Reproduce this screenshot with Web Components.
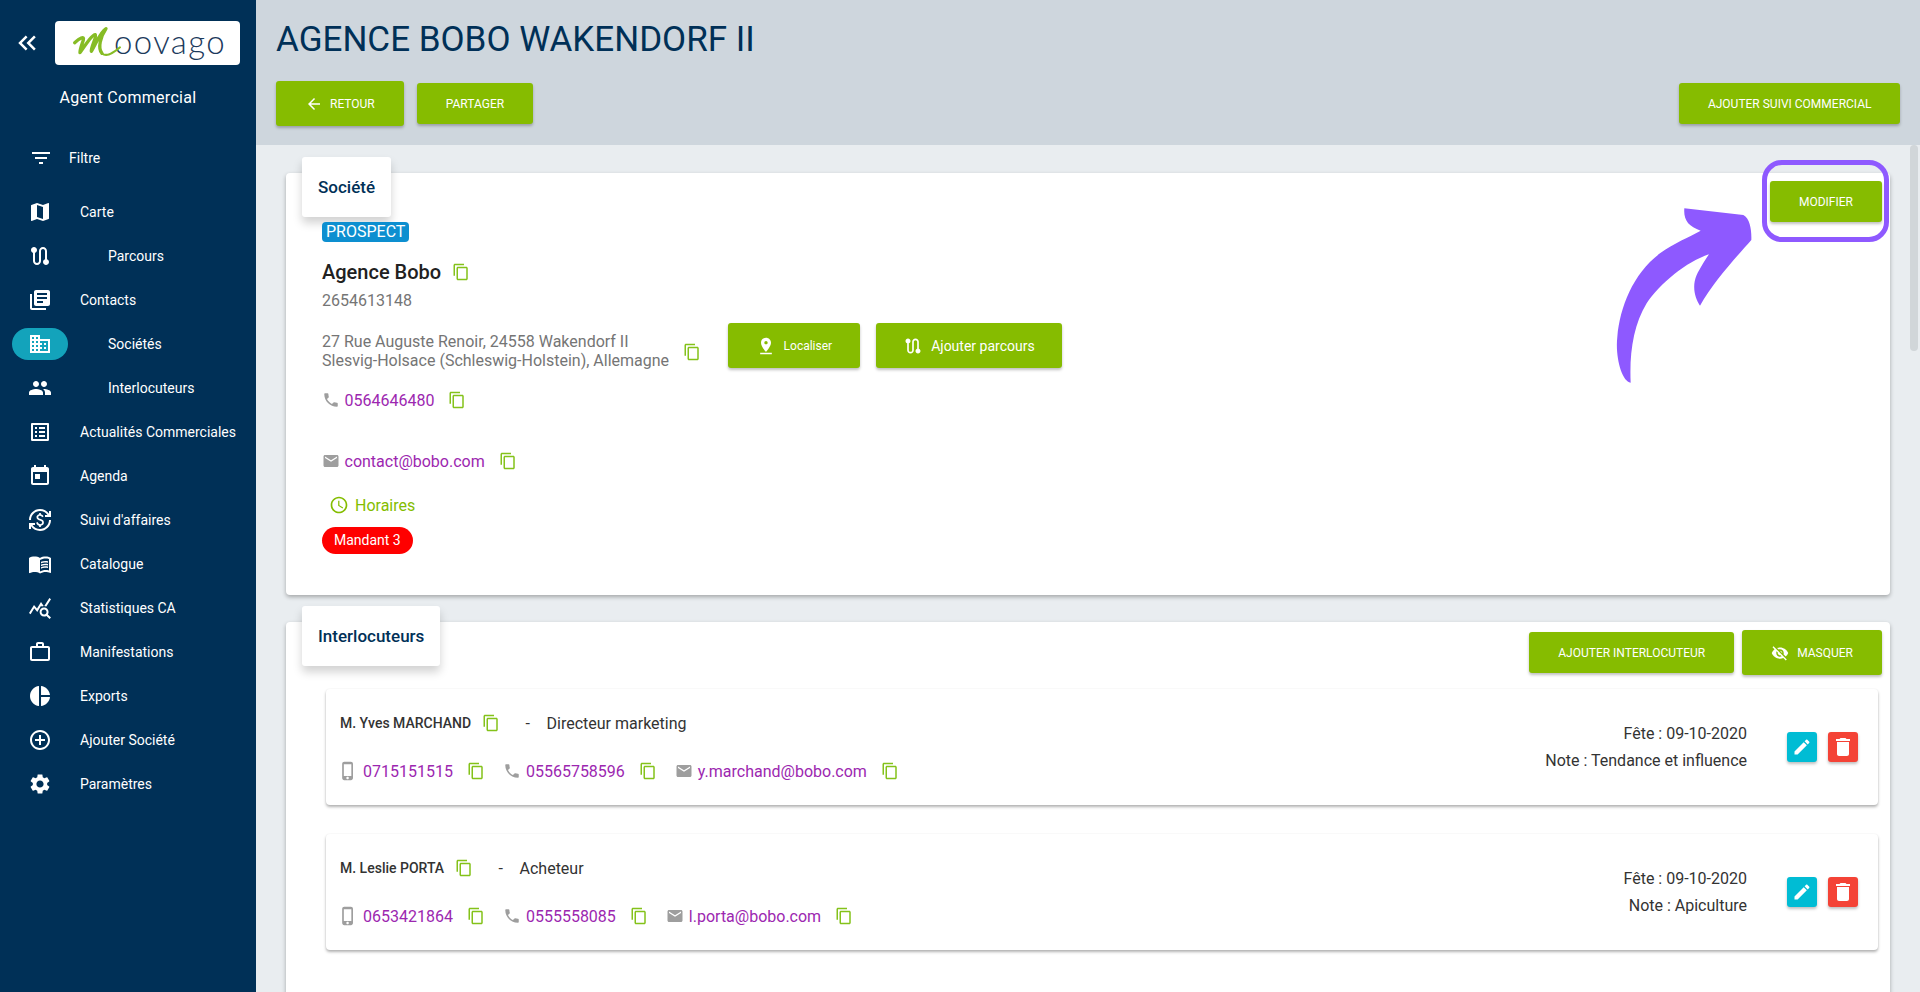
<!DOCTYPE html>
<html lang="fr">
<head>
<meta charset="utf-8">
<title>Moovago</title>
<style>
  html, body { margin: 0; height: 100%; overflow: hidden; }
  body { font-family: Roboto, "Liberation Sans", sans-serif; }
</style>
</head>
<body>
<x-app>
  <x-sidebar slot="side" role="Agent Commercial">
    <x-nav icon="filter" filter>Filtre</x-nav>
    <x-nav icon="map" style="margin-top:10px">Carte</x-nav>
    <x-nav icon="route" sub>Parcours</x-nav>
    <x-nav icon="books">Contacts</x-nav>
    <x-nav icon="domain" sub active>Sociétés</x-nav>
    <x-nav icon="people" sub>Interlocuteurs</x-nav>
    <x-nav icon="listalt">Actualités Commerciales</x-nav>
    <x-nav icon="today">Agenda</x-nav>
    <x-nav icon="exchange">Suivi d'affaires</x-nav>
    <x-nav icon="book">Catalogue</x-nav>
    <x-nav icon="stats">Statistiques CA</x-nav>
    <x-nav icon="work">Manifestations</x-nav>
    <x-nav icon="pie">Exports</x-nav>
    <x-nav icon="addcircle">Ajouter Société</x-nav>
    <x-nav icon="settings">Paramètres</x-nav>
  </x-sidebar>

  <x-header slot="head" title="AGENCE BOBO WAKENDORF II">
    <x-btn icon="back" tall upper style="gap:7px">Retour</x-btn>
    <x-btn upper>Partager</x-btn>
    <x-btn upper slot="right" style="padding:0 28.5px">Ajouter suivi commercial</x-btn>
  </x-header>

  <x-card label="Société" style="padding-bottom:41px">
    <x-btn upper slot="actions" style="margin:24px 8px 0 0;width:112px">Modifier</x-btn>
    <x-company></x-company>
  </x-card>

  <x-card label="Interlocuteurs" style="margin-top:27px;min-height:500px">
    <x-btn upper slot="actions" style="margin:26px 0 0 0">Ajouter interlocuteur</x-btn>
    <x-btn upper slot="actions" icon="eyeoff" tall style="margin:24px 8px 0 8px">Masquer</x-btn>
    <x-contact name="M. Yves MARCHAND" job="Directeur marketing" mobile="0715151515" tel="05565758596" mail="y.marchand@bobo.com" note="Tendance et influence"></x-contact>
    <x-contact name="M. Leslie PORTA" job="Acheteur" mobile="0653421864" tel="0555558085" mail="l.porta@bobo.com" note="Apiculture" style="margin-top:29px"></x-contact>
  </x-card>
</x-app>

<script>
const ICONS = {
  chevrons: "M17.59 18 19 16.59 14.42 12 19 7.41 17.59 6l-6 6zM11 18l1.41-1.41L7.83 12l4.58-4.59L11 6l-6 6z",
  filter: "M10 18h4v-2h-4v2zM3 6v2h18V6H3zm3 7h12v-2H6v2z",
  map: "M20.5 3l-.16.03L15 5.1 9 3 3.36 4.9c-.21.07-.36.25-.36.48V20.5c0 .28.22.5.5.5l.16-.03L9 18.9l6 2.1 5.64-1.9c.21-.07.36-.25.36-.48V3.5c0-.28-.22-.5-.5-.5zM15 19l-6-2.11V5l6 2.11V19z",
  route: "M19 15.18V7c0-2.21-1.79-4-4-4s-4 1.79-4 4v10c0 1.1-.9 2-2 2s-2-.9-2-2V8.82C8.16 8.4 9 7.3 9 6c0-1.66-1.34-3-3-3S3 4.34 3 6c0 1.3.84 2.4 2 2.82V17c0 2.21 1.79 4 4 4s4-1.79 4-4V7c0-1.1.9-2 2-2s2 .9 2 2v8.18c-1.16.41-2 1.51-2 2.82 0 1.66 1.34 3 3 3s3-1.34 3-3c0-1.3-.84-2.4-2-2.82z",
  books: "M4 6H2v14c0 1.1.9 2 2 2h14v-2H4V6zm16-4H8c-1.1 0-2 .9-2 2v12c0 1.1.9 2 2 2h12c1.1 0 2-.9 2-2V4c0-1.1-.9-2-2-2zm-1 9H9V9h10v2zm-4 4H9v-2h6v2zm4-8H9V5h10v2z",
  domain: "M12 7V3H2v18h20V7H12zM6 19H4v-2h2v2zm0-4H4v-2h2v2zm0-4H4V9h2v2zm0-4H4V5h2v2zm4 12H8v-2h2v2zm0-4H8v-2h2v2zm0-4H8V9h2v2zm0-4H8V5h2v2zm10 12h-8v-2h2v-2h-2v-2h2v-2h-2V9h8v10zm-2-8h-2v2h2v-2zm0 4h-2v2h2v-2z",
  people: "M16 11c1.66 0 2.99-1.34 2.99-3S17.66 5 16 5c-1.66 0-3 1.34-3 3s1.34 3 3 3zm-8 0c1.66 0 2.99-1.34 2.99-3S9.66 5 8 5C6.34 5 5 6.34 5 8s1.34 3 3 3zm0 2c-2.33 0-7 1.17-7 3.5V19h14v-2.5c0-2.33-4.67-3.5-7-3.5zm8 0c-.29 0-.62.02-.97.05 1.16.84 1.97 1.97 1.97 3.45V19h6v-2.5c0-2.33-4.67-3.5-7-3.5z",
  listalt: "M19 5v14H5V5h14m1.1-2H3.9c-.5 0-.9.4-.9.9v16.2c0 .4.4.9.9.9h16.2c.4 0 .9-.5.9-.9V3.9c0-.5-.5-.9-.9-.9zM11 7h6v2h-6V7zm0 4h6v2h-6v-2zm0 4h6v2h-6v-2zM7 7h2v2H7V7zm0 4h2v2H7v-2zm0 4h2v2H7v-2z",
  today: "M19 3h-1V1h-2v2H8V1H6v2H5c-1.11 0-1.99.9-1.99 2L3 19c0 1.1.89 2 2 2h14c1.1 0 2-.9 2-2V5c0-1.1-.9-2-2-2zm0 16H5V8h14v11zM7 10h5v5H7z",
  exchange: "M12.89 11.1c-1.78-.59-2.64-.96-2.64-1.9 0-1.02 1.11-1.39 1.81-1.39 1.31 0 1.79.99 1.9 1.34l1.58-.67c-.15-.44-.82-1.91-2.66-2.23V5h-1.75v1.26c-2.6.56-2.62 2.85-2.62 2.96 0 2.27 2.25 2.91 3.35 3.31 1.58.56 2.28 1.07 2.28 2.03 0 1.13-1.05 1.61-1.98 1.61-1.82 0-2.34-1.87-2.4-2.09l-1.66.67c.63 2.19 2.28 2.78 3.02 2.96V19h1.75v-1.24c.52-.09 3.02-.59 3.02-3.22.01-1.39-.6-2.61-3.05-3.44zM3 21H1v-6h6v2H4.52c1.61 2.41 4.36 4 7.48 4 4.97 0 9-4.03 9-9h2c0 6.08-4.92 11-11 11-3.72 0-7.01-1.85-9-4.67V21zm-2-9C1 5.92 5.92 1 12 1c3.72 0 7.01 1.85 9 4.67V3h2v6h-6V7h2.48C17.87 4.59 15.12 3 12 3c-4.97 0-9 4.03-9 9H1z",
  book: "M21 5c-1.11-.35-2.33-.5-3.5-.5-1.95 0-4.05.4-5.5 1.5-1.45-1.1-3.55-1.5-5.5-1.5S2.45 4.9 1 6v14.65c0 .25.25.5.5.5.1 0 .15-.05.25-.05C3.1 20.45 5.05 20 6.5 20c1.95 0 4.05.4 5.5 1.5 1.35-.85 3.8-1.5 5.5-1.5 1.65 0 3.35.3 4.75 1.05.1.05.15.05.25.05.25 0 .5-.25.5-.5V6c-.6-.45-1.25-.75-2-1zm0 13.5c-1.1-.35-2.3-.5-3.5-.5-1.7 0-4.15.65-5.5 1.5V8c1.35-.85 3.8-1.5 5.5-1.5 1.2 0 2.4.15 3.5.5v11.5zM17.5 10.5c.88 0 1.73.09 2.5.26V9.24c-.79-.15-1.64-.24-2.5-.24-1.7 0-3.24.29-4.5.83v1.66c1.13-.64 2.7-.99 4.5-.99zM13 12.49v1.66c1.13-.64 2.7-.99 4.5-.99.88 0 1.73.09 2.5.26V11.9c-.79-.15-1.64-.24-2.5-.24-1.7 0-3.24.3-4.5.83zM17.5 14.33c-1.7 0-3.24.29-4.5.83v1.66c1.13-.64 2.7-.99 4.5-.99.88 0 1.73.09 2.5.26v-1.52c-.79-.16-1.64-.24-2.5-.24z",
  stats: "M19.88 18.47c.44-.7.7-1.51.7-2.39 0-2.49-2.01-4.5-4.5-4.5s-4.5 2.01-4.5 4.5 2.01 4.5 4.49 4.5c.88 0 1.7-.26 2.39-.7L21.58 23 23 21.58l-3.12-3.11zm-3.8.11c-1.38 0-2.5-1.12-2.5-2.5s1.12-2.5 2.5-2.5 2.5 1.12 2.5 2.5-1.12 2.5-2.5 2.5zm-.36-8.5c-.74.02-1.45.18-2.1.45l-.55-.83-3.8 6.18-3.01-3.52-3.63 5.81L1 17l5-8 3 3.5L13 6l2.72 4.08zm2.59.5c-.64-.28-1.33-.45-2.05-.49L21.38 2 23 3.18l-4.69 7.4z",
  work: "M14 6V4h-4v2h4zM4 8v11h16V8H4zm16-2c1.11 0 2 .89 2 2v11c0 1.11-.89 2-2 2H4c-1.11 0-2-.89-2-2l.01-11c0-1.11.88-2 1.99-2h4V4c0-1.11.89-2 2-2h4c1.11 0 2 .89 2 2v2h4z",
  pie: "M11 2v20c-5.07-.5-9-4.79-9-10s3.93-9.5 9-10zm2.03 0v8.99H22c-.47-4.74-4.24-8.52-8.97-8.99zm0 11.01V22c4.74-.47 8.5-4.25 8.97-8.99h-8.97z",
  addcircle: "M13 7h-2v4H7v2h4v4h2v-4h4v-2h-4V7zm-1-5C6.48 2 2 6.48 2 12s4.48 10 10 10 10-4.48 10-10S17.52 2 12 2zm0 18c-4.41 0-8-3.59-8-8s3.59-8 8-8 8 3.59 8 8-3.59 8-8 8z",
  settings: "M19.14 12.94c.04-.3.06-.61.06-.94 0-.32-.02-.64-.07-.94l2.03-1.58c.18-.14.23-.41.12-.61l-1.92-3.32c-.12-.22-.37-.29-.59-.22l-2.39.96c-.5-.38-1.03-.7-1.62-.94l-.36-2.54c-.04-.24-.24-.41-.48-.41h-3.84c-.24 0-.43.17-.47.41l-.36 2.54c-.59.24-1.13.57-1.62.94l-2.39-.96c-.22-.08-.47 0-.59.22L2.74 8.87c-.12.21-.08.47.12.61l2.03 1.58c-.05.3-.09.63-.09.94s.02.64.07.94l-2.03 1.58c-.18.14-.23.41-.12.61l1.92 3.32c.12.22.37.29.59.22l2.39-.96c.5.38 1.03.7 1.62.94l.36 2.54c.05.24.24.41.48.41h3.84c.24 0 .44-.17.47-.41l.36-2.54c.59-.24 1.13-.56 1.62-.94l2.39.96c.22.08.47 0 .59-.22l1.92-3.32c.12-.22.07-.47-.12-.61l-2.01-1.58zM12 15.6c-1.98 0-3.6-1.62-3.6-3.6s1.62-3.6 3.6-3.6 3.6 1.62 3.6 3.6-1.62 3.6-3.6 3.6z",
  back: "M20 11H7.83l5.59-5.59L12 4l-8 8 8 8 1.41-1.41L7.83 13H20v-2z",
  copy: "M16 1H4c-1.1 0-2 .9-2 2v14h2V3h12V1zm3 4H8c-1.1 0-2 .9-2 2v14c0 1.1.9 2 2 2h11c1.1 0 2-.9 2-2V7c0-1.1-.9-2-2-2zm0 16H8V7h11v14z",
  phone: "M6.62 10.79c1.44 2.83 3.76 5.14 6.59 6.59l2.2-2.2c.27-.27.67-.36 1.02-.24 1.12.37 2.33.57 3.57.57.55 0 1 .45 1 1V20c0 .55-.45 1-1 1-9.39 0-17-7.61-17-17 0-.55.45-1 1-1h3.5c.55 0 1 .45 1 1 0 1.25.2 2.45.57 3.57.11.35.03.74-.25 1.02l-2.2 2.2z",
  mail: "M20 4H4c-1.1 0-1.99.9-1.99 2L2 18c0 1.1.9 2 2 2h16c1.1 0 2-.9 2-2V6c0-1.1-.9-2-2-2zm0 4l-8 5-8-5V6l8 5 8-5v2z",
  mobile: "M15.5 1h-8C6.12 1 5 2.12 5 3.5v17C5 21.88 6.12 23 7.5 23h8c1.38 0 2.5-1.12 2.5-2.5v-17C18 2.12 16.88 1 15.5 1zm-4 21c-.83 0-1.5-.67-1.5-1.5s.67-1.5 1.5-1.5 1.5.67 1.5 1.5-.67 1.5-1.5 1.5zm4.5-4H7V4h9v14z",
  clock: "M11.99 2C6.47 2 2 6.48 2 12s4.47 10 9.99 10C17.52 22 22 17.52 22 12S17.52 2 11.99 2zM12 20c-4.42 0-8-3.58-8-8s3.58-8 8-8 8 3.58 8 8-3.58 8-8 8zm.5-13H11v6l5.25 3.15.75-1.23-4.5-2.67z",
  pin: "M18 8c0-3.31-2.69-6-6-6S6 4.69 6 8c0 4.5 6 11 6 11s6-6.5 6-11zm-8 0c0-1.1.9-2 2-2s2 .9 2 2-.89 2-2 2c-1.1 0-2-.9-2-2zM5 20v2h14v-2H5z",
  eyeoff: "M12 7c2.76 0 5 2.24 5 5 0 .65-.13 1.26-.36 1.83l2.92 2.92c1.51-1.26 2.7-2.89 3.43-4.75-1.73-4.39-6-7.5-11-7.5-1.4 0-2.74.25-3.98.7l2.16 2.16C10.74 7.13 11.35 7 12 7zM2 4.27l2.28 2.28.46.46C3.08 8.3 1.78 10.02 1 12c1.73 4.39 6 7.5 11 7.5 1.55 0 3.03-.3 4.38-.84l.42.42L19.73 22 21 20.73 3.27 3 2 4.27zM7.53 9.8l1.55 1.55c-.05.21-.08.43-.08.65 0 1.66 1.34 3 3 3 .22 0 .44-.03.65-.08l1.55 1.55c-.67.33-1.41.53-2.2.53-2.76 0-5-2.24-5-5 0-.79.2-1.53.53-2.2zm4.31-.78l3.15 3.15.02-.16c0-1.66-1.34-3-3-3l-.17.01z",
  edit: "M3 17.25V21h3.75L17.81 9.94l-3.75-3.75L3 17.25zM20.71 7.04c.39-.39.39-1.02 0-1.41l-2.34-2.34c-.39-.39-1.02-.39-1.41 0l-1.83 1.83 3.75 3.75 1.83-1.83z",
  trash: "M6 19c0 1.1.9 2 2 2h8c1.1 0 2-.9 2-2V7H6v12zM19 4h-3.5l-1-1h-5l-1 1H5v2h14V4z"
};

class XIcon extends HTMLElement {
  connectedCallback() {
    const size = this.getAttribute("size") || 24;
    this.attachShadow({ mode: "open" }).innerHTML = `
      <style>
        :host { display: inline-flex; flex: none; width: ${size}px; height: ${size}px; color: inherit; }
        svg { display: block; width: 100%; height: 100%; fill: currentColor; }
      </style>
      <svg viewBox="0 0 24 24"><path d="${ICONS[this.getAttribute("name")]}"/></svg>`;
  }
}

class XApp extends HTMLElement {
  constructor() {
    super();
    this.attachShadow({ mode: "open" }).innerHTML = `
      <style>
        :host { display: flex; position: relative; height: 100vh; overflow: hidden; }
        .col { flex: 1; min-width: 0; display: flex; flex-direction: column; }
        .main { flex: 1; overflow: hidden; background: #e9edf0; padding: 28px 30px 0; }
        .thumb { position: absolute; left: 1910px; top: 145px; width: 8px; height: 206px; border-radius: 4px; background: #d1d6d9; }
        .ring { position: absolute; left: 1762px; top: 160px; width: 117px; height: 72px; border: 5px solid #8e59ff; border-radius: 20px; }
        .arrow { position: absolute; left: 1580px; top: 60px; width: 340px; height: 340px; fill: #8e59ff; }
      </style>
      <slot name="side"></slot>
      <div class="col">
        <slot name="head"></slot>
        <div class="main"><slot></slot></div>
      </div>
      <div class="thumb"></div>
      <div class="ring"></div>
      <svg class="arrow" viewBox="0 0 1020 1020"><path d="M313 445 490 465C510 475 515 510 514 540 470 590 400 665 360 737 345 715 335 680 350 645 360 625 375 600 387 583 320 605 240 670 200 730 160 795 148 880 152 968 125 965 105 890 112 830 120 740 160 640 240 580 280 550 330 530 362 512 325 500 310 480 313 445Z"/></svg>`;
  }
}

class XLogo extends HTMLElement {
  constructor() {
    super();
    this.attachShadow({ mode: "open" }).innerHTML = `
      <style>
        :host { display: flex; align-items: center; position: relative; box-sizing: border-box; width: 185px; height: 44px; padding-left: 59px; background: #fff; border-radius: 4px; }
        span { font: 300 33px/44px Lato, sans-serif; color: #1c3a5c; letter-spacing: 1.4px; margin-top: -4px; }
        svg { position: absolute; inset: 0; width: 100%; height: 100%; fill: none; stroke: #86bc25; stroke-linecap: round; stroke-linejoin: round; }
      </style>
      <span>oovago</span>
      <svg viewBox="15 9 555 132">
        <path stroke-width="10" d="M74 74C88 62 104 52 100 66 96 80 90 92 90 104 104 84 128 48 136 50 142 54 122 88 124 100 136 82 150 42 168 32 152 56 142 90 156 106"/>
        <path stroke-width="6" d="M156 106C168 118 192 104 210 88"/>
      </svg>`;
  }
}

class XSidebar extends HTMLElement {
  connectedCallback() {
    this.attachShadow({ mode: "open" }).innerHTML = `
      <style>
        :host { display: block; flex: none; width: 256px; height: 100%; box-sizing: border-box; padding-top: 21px; background: #003057; color: #fff; font-size: 14px; }
        .top { display: flex; align-items: center; padding-left: 12px; gap: 13px; }
        .role { margin: 22px 0 27px; text-align: center; font-size: 16px; line-height: 22px; letter-spacing: .3px; }
      </style>
      <div class="top"><x-icon name="chevrons" size="30"></x-icon><x-logo></x-logo></div>
      <div class="role">${this.getAttribute("role")}</div>
      <slot></slot>`;
  }
}

class XNav extends HTMLElement {
  connectedCallback() {
    this.attachShadow({ mode: "open" }).innerHTML = `
      <style>
        :host { display: flex; align-items: center; height: 44px; padding-left: 12px; }
        :host([filter]) { padding-left: 13px; }
        .pill { width: 56px; height: 32px; display: flex; align-items: center; justify-content: center; border-radius: 16px; }
        :host([active]) .pill { background: #13a3bb; }
        .txt { margin-left: 12px; }
        :host([filter]) .txt { margin-left: 0; }
        :host([sub]) .txt { margin-left: 40px; }
      </style>
      <div class="pill"><x-icon name="${this.getAttribute("icon")}"></x-icon></div>
      <div class="txt"><slot></slot></div>`;
  }
}

class XHeader extends HTMLElement {
  connectedCallback() {
    this.attachShadow({ mode: "open" }).innerHTML = `
      <style>
        :host { display: block; height: 145px; box-sizing: border-box; padding: 20px 20px 0; background: #ced6dd; }
        h1 { margin: 0; font-weight: 400; font-size: 35px; line-height: 40px; color: #003057; }
        .bar { display: flex; align-items: center; height: 45px; margin-top: 21px; }
        ::slotted(x-btn:not(:first-child)) { margin-left: 13px; }
        .sp { flex: 1; }
      </style>
      <h1>${this.getAttribute("title")}</h1>
      <div class="bar"><slot></slot><div class="sp"></div><slot name="right"></slot></div>`;
    this.removeAttribute("title");
  }
}

class XBtn extends HTMLElement {
  connectedCallback() {
    const icon = this.getAttribute("icon");
    const size = this.getAttribute("icon-size") || 18;
    this.attachShadow({ mode: "open" }).innerHTML = `
      <style>
        :host { display: inline-flex; align-items: center; justify-content: center; gap: 8px; box-sizing: border-box; height: 41px; padding: 0 29px; background: #86bc00; color: #fff; font-size: 12px; border-radius: 3px; box-shadow: 0 2px 3px rgba(0,0,0,.25); white-space: nowrap; }
        :host([tall]) { height: 45px; }
        :host([upper]) { text-transform: uppercase; }
      </style>
      ${icon ? `<x-icon name="${icon}" size="${size}"></x-icon>` : ""}<slot></slot>`;
  }
}

class XCard extends HTMLElement {
  connectedCallback() {
    this.attachShadow({ mode: "open" }).innerHTML = `
      <style>
        :host { display: flow-root; background: #fff; border-radius: 4px; box-shadow: 0 2px 4px rgba(0,0,0,.3); }
        .head { display: flex; align-items: flex-start; margin-top: -16px; padding-left: 16px; height: 60px; }
        .tab { height: 60px; line-height: 60px; padding: 0 16px; background: #fff; border-radius: 3px; color: #003057; font-weight: 500; font-size: 17px; box-shadow: 0 6px 10px rgba(0,0,0,.18); }
        .sp { flex: 1; }
      </style>
      <div class="head"><div class="tab">${this.getAttribute("label")}</div><div class="sp"></div><slot name="actions"></slot></div>
      <slot></slot>`;
  }
}

class XCopy extends HTMLElement {
  connectedCallback() {
    this.attachShadow({ mode: "open" }).innerHTML = `
      <style>:host { display: inline-flex; flex: none; color: #84c21a; }</style>
      <x-icon name="copy" size="18"></x-icon>`;
  }
}

// icon + lien violet + bouton copier
class XLink extends HTMLElement {
  connectedCallback() {
    const size = this.getAttribute("size") || 18;
    this.attachShadow({ mode: "open" }).innerHTML = `
      <style>
        :host { display: inline-flex; align-items: center; height: 24px; font-size: 16px; }
        x-icon { color: #9e9e9e; margin-right: 5px; }
        a { color: #9c27b0; margin-right: 14px; }
      </style>
      <x-icon name="${this.getAttribute("icon")}" size="${size}"></x-icon><a><slot></slot></a><x-copy></x-copy>`;
  }
}

class XCompany extends HTMLElement {
  constructor() {
    super();
    this.attachShadow({ mode: "open" }).innerHTML = `
      <style>
        :host { display: block; padding-left: 36px; font-size: 16px; color: #757575; }
        .badge { display: inline-block; height: 20px; line-height: 20px; margin-top: 5px; padding: 0 4px; background: #0d8fd0; color: #fff; border-radius: 4px; vertical-align: top; }
        .name { display: flex; align-items: center; gap: 11px; height: 30px; margin-top: 15px; font-size: 20px; font-weight: 500; color: #212121; }
        .siret { height: 24px; line-height: 24px; margin-top: 2px; }
        .addr { display: flex; margin-top: 10px; height: 45px; }
        .addr p { margin: 9px 14px 0 0; line-height: 19px; white-space: nowrap; }
        .addr x-copy { margin: 20px 27px 0 0; }
        .addr x-btn { padding: 0 27.5px; }
        .addr x-btn + x-btn { margin-left: 16px; }
        .big { font-size: 14px; }
        .tel { display: flex; margin: 20px 0 0 -.5px; }
        .mail { display: flex; margin: 37px 0 0 -.5px; }
        .hours { display: flex; align-items: center; height: 24px; margin: 20px 0 0 6.5px; color: #84bd00; gap: 6.5px; }
        .chip { display: inline-block; height: 27px; line-height: 27px; margin-top: 10px; padding: 0 12px; border-radius: 14px; background: #f00; color: #fff; font-size: 14px; vertical-align: top; }
      </style>
      <div style="height:25px"><span class="badge">PROSPECT</span></div>
      <div class="name">Agence Bobo <x-copy></x-copy></div>
      <div class="siret">2654613148</div>
      <div class="addr">
        <p>27 Rue Auguste Renoir, 24558 Wakendorf II<br>Slesvig-Holsace (Schleswig-Holstein), Allemagne</p>
        <x-copy></x-copy>
        <x-btn icon="pin" icon-size="20" tall>Localiser</x-btn>
        <x-btn class="big" icon="route" icon-size="20" tall>Ajouter parcours</x-btn>
      </div>
      <x-link class="tel" icon="phone">0564646480</x-link>
      <x-link class="mail" icon="mail">contact@bobo.com</x-link>
      <div class="hours"><x-icon name="clock" size="20"></x-icon>Horaires</div>
      <div><span class="chip">Mandant 3</span></div>`;
  }
}

class XContact extends HTMLElement {
  connectedCallback() {
    const a = (n) => this.getAttribute(n);
    this.attachShadow({ mode: "open" }).innerHTML = `
      <style>
        :host { display: flex; align-items: center; box-sizing: border-box; height: 116px; margin: 23px 12px 0 40px; padding: 0 20px 0 14px; background: #fff; border-radius: 4px; box-shadow: 0 2px 3px rgba(0,0,0,.3), 0 0 2px rgba(0,0,0,.06); color: #333; font-size: 16px; }
        .left { flex: 1; }
        .l1 { display: flex; align-items: center; height: 24px; margin-bottom: 24px; }
        .who { font-size: 14px; font-weight: 500; margin-right: 10.5px; }
        .dash { margin-left: 26px; }
        .job { margin-left: 16.5px; }
        .l2 { display: flex; align-items: center; height: 24px; margin-left: -2px; }
        .l2 x-link { margin-right: 18px; }
        .right { text-align: right; line-height: 27px; margin-right: 40px; }
        .ab { display: flex; align-items: center; justify-content: center; width: 30px; height: 30px; border-radius: 3px; color: #fff; box-shadow: 0 2px 3px rgba(0,0,0,.25); }
        .e { background: #00bcd4; margin-right: 11px; }
        .d { background: #f44336; }
      </style>
      <div class="left">
        <div class="l1"><span class="who">${a("name")}</span><x-copy></x-copy><span class="dash">-</span><span class="job">${a("job")}</span></div>
        <div class="l2">
          <x-link icon="mobile" size="20">${a("mobile")}</x-link>
          <x-link icon="phone">${a("tel")}</x-link>
          <x-link icon="mail">${a("mail")}</x-link>
        </div>
      </div>
      <div class="right">Fête : 09-10-2020<br>Note : ${a("note")}</div>
      <div class="ab e"><x-icon name="edit" size="20"></x-icon></div>
      <div class="ab d"><x-icon name="trash" size="24"></x-icon></div>`;
  }
}

customElements.define("x-icon", XIcon);
customElements.define("x-logo", XLogo);
customElements.define("x-btn", XBtn);
customElements.define("x-copy", XCopy);
customElements.define("x-link", XLink);
customElements.define("x-nav", XNav);
customElements.define("x-sidebar", XSidebar);
customElements.define("x-header", XHeader);
customElements.define("x-card", XCard);
customElements.define("x-company", XCompany);
customElements.define("x-contact", XContact);
customElements.define("x-app", XApp);
</script>
</body>
</html>
